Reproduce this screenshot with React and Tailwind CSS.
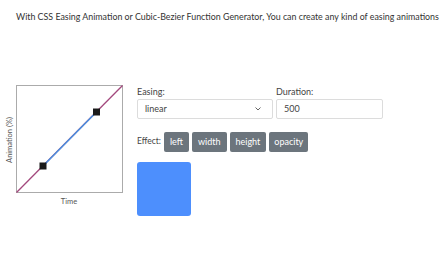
import React from "react";

export default function App() {
  const font = { fontFamily: 'Lato, "Noto Sans", sans-serif' };
  return (
    <div className="w-[440px] h-[264px] bg-white overflow-hidden text-[#333]" style={font}>
      <p className="pl-4 pt-[11px] text-[8.85px] leading-[12px] whitespace-nowrap overflow-hidden text-[#333]">
        With CSS Easing Animation or Cubic-Bezier Function Generator, You can create any kind of easing animations and use them in your projects.
      </p>
      <div className="flex mt-[62px]">
        <svg width="130" height="130" viewBox="0 0 130 130" className="shrink-0 -mt-[5px]">
          <rect x="16.5" y="5.5" width="106" height="107" fill="none" stroke="#ababab" strokeWidth="1" />
          <line x1="16.5" y1="112.5" x2="122.5" y2="5.5" stroke="#a3487d" strokeWidth="1.3" />
          <line x1="43" y1="86" x2="96.5" y2="32" stroke="#4a90e2" strokeWidth="1.5" />
          <rect x="39.5" y="82.5" width="7" height="7" fill="#1a1a1a" />
          <rect x="93" y="28.5" width="7" height="7" fill="#1a1a1a" />
          <text x="69" y="124" textAnchor="middle" fontSize="7.5" fill="#555" style={font}>Time</text>
          <text x="0" y="0" textAnchor="middle" fontSize="7.5" fill="#555" style={font} transform="translate(12 60) rotate(-90)">Animation (%)</text>
        </svg>
        <div className="ml-[7px] flex flex-col">
          <div className="flex gap-[3px]">
            <div className="flex flex-col w-[136px]">
              <label className="text-[9px] leading-[12px] text-[#444] mt-[1px]">Easing:</label>
              <div className="mt-[1px] h-[20px] border border-[#dcdcdc] rounded-[2px] flex items-center justify-between px-[7px] text-[9px] text-[#444]">
                <span>linear</span>
                <svg width="6" height="4" viewBox="0 0 6 4" className="mr-[4px]">
                  <path d="M0.5 0.5 L3 3 L5.5 0.5" fill="none" stroke="#555" strokeWidth="0.9" />
                </svg>
              </div>
            </div>
            <div className="flex flex-col w-[107px]">
              <label className="text-[9px] leading-[12px] text-[#444] mt-[1px]">Duration:</label>
              <div className="mt-[1px] h-[20px] border border-[#dcdcdc] rounded-[2px] flex items-center px-[7px] text-[9px] text-[#444]">
                500
              </div>
            </div>
          </div>
          <div className="flex items-center mt-[13px] gap-[3px]">
            <span className="text-[8.5px] text-[#444] -mt-[2px]">Effect:</span>
            <button className="h-[20px] px-[6px] bg-[#6c757d] text-white text-[9px] rounded-[2px]">left</button>
            <button className="h-[20px] px-[6px] bg-[#6c757d] text-white text-[9px] rounded-[2px]">width</button>
            <button className="h-[20px] px-[6px] bg-[#6c757d] text-white text-[9px] rounded-[2px]">height</button>
            <button className="h-[20px] px-[5px] bg-[#6c757d] text-white text-[9px] rounded-[2px]">opacity</button>
          </div>
          <div className="mt-[10px] w-[54px] h-[54px] bg-[#4d8ffd] rounded-[3px]"></div>
        </div>
      </div>
    </div>
  );
}
